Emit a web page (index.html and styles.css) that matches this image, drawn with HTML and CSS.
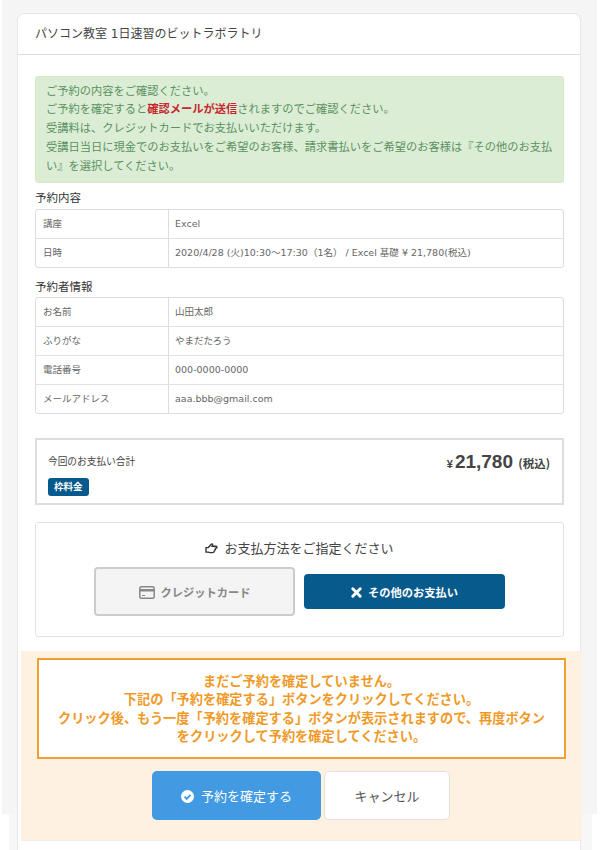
FILE: index.html
```html
<!DOCTYPE html>
<html lang="ja">
<head>
  <meta charset="UTF-8">
  <title>ご予約の確認</title>
  <link rel="stylesheet" href="styles.css">
</head>
<body>
  <div class="panel">
    <div class="panel-head">パソコン教室 1日速習のビットラボラトリ</div>
    <div class="panel-body">
      <div class="alert">
        ご予約の内容をご確認ください。<br>
        ご予約を確定すると<strong>確認メールが送信</strong>されますのでご確認ください。<br>
        受講料は、クレジットカードでお支払いいただけます。<br>
        受講日当日に現金でのお支払いをご希望のお客様、請求書払いをご希望のお客様は『その他のお支払い』を選択してください。
      </div>

      <h2 class="sec-title">予約内容</h2>
      <div class="info-table">
        <div class="row"><div class="key">講座</div><div class="val">Excel</div></div>
        <div class="row"><div class="key">日時</div><div class="val">2020/4/28 (火)10:30～17:30（1名） / Excel 基礎 ¥ 21,780(税込)</div></div>
      </div>

      <h2 class="sec-title second">予約者情報</h2>
      <div class="info-table">
        <div class="row"><div class="key">お名前</div><div class="val">山田太郎</div></div>
        <div class="row"><div class="key">ふりがな</div><div class="val">やまだたろう</div></div>
        <div class="row"><div class="key">電話番号</div><div class="val">000-0000-0000</div></div>
        <div class="row"><div class="key">メールアドレス</div><div class="val">aaa.bbb@gmail.com</div></div>
      </div>

      <div class="total">
        <div>
          <div class="total-label">今回のお支払い合計</div>
          <span class="tag">枠料金</span>
        </div>
        <div class="price"><small class="yen">¥</small>21,780 <small class="tax">(税込)</small></div>
      </div>

      <div class="pay">
        <div class="pay-title">
          <svg class="ico-hand" viewBox="0 0 14 12" width="13" height="11"><path d="M1 5h2.500L7 1.200c.6-.5 1.500 0 1.200.9L7.600 3.600h4.400c1.300 0 1.300 2 0 2h-.7c.5.900 0 1.600-.6 1.800.2.900-.2 1.500-.9 1.700 0 1-.6 1.400-1.500 1.400H5.500L3.500 10H1z" fill="none" stroke="#333" stroke-width="1.500"/></svg>
          お支払方法をご指定ください
        </div>
        <div class="pay-btns">
          <button class="btn-card">
            <svg viewBox="0 0 16 13" width="16" height="13"><rect x=".8" y=".8" width="14.400" height="11.400" rx="1.500" fill="none" stroke="#888" stroke-width="1.500"/><rect x="1" y="3" width="14" height="2.500" fill="#888"/><rect x="3" y="9" width="3" height="1" fill="#888"/></svg>
            クレジットカード
          </button>
          <button class="btn-other">
            <svg viewBox="0 0 12 12" width="11" height="11"><path d="M2 2l8 8M10 2l-8 8" stroke="#fff" stroke-width="3.200" stroke-linecap="round"/></svg>
            その他のお支払い
          </button>
        </div>
      </div>
    </div>

    <div class="confirm">
      <div class="notice">
        まだご予約を確定していません。<br>
        下記の「予約を確定する」ボタンをクリックしてください。<br>
        クリック後、もう一度「予約を確定する」ボタンが表示されますので、再度ボタンをクリックして予約を確定してください。
      </div>
      <div class="confirm-btns">
        <button class="btn-ok">
          <svg viewBox="0 0 14 14" width="13" height="13"><circle cx="7" cy="7" r="7" fill="#fff"/><path d="M3.800 7.200l2.300 2.300 4.200-4.300" fill="none" stroke="#419ae2" stroke-width="2"/></svg>
          予約を確定する
        </button>
        <button class="btn-cancel">キャンセル</button>
      </div>
    </div>
  </div>
</body>
</html>
```

FILE: styles.css
```css
html, body { margin:0; padding:0; }
body {
  height:850px; overflow:hidden;
  font-family:"DejaVu Sans","Noto Sans CJK JP",sans-serif;
  color:#555;
  background:
    linear-gradient(#f5f5f5,#f5f5f5) 2px 0/595px 814px no-repeat,
    linear-gradient(#f7f7f7,#f7f7f7) 9px 0/583px 100% no-repeat,
    #fff;
}
.panel { margin:14px 0 0 18px; width:562px; height:836px; background:#fff; border-radius:6px 6px 0 0; box-shadow:0 0 0 1px #e6e6e6; }
.panel-head { height:41px; line-height:41px; padding-left:17px; font-size:12px; color:#444; border-bottom:1px solid #ddd; box-sizing:border-box; }
.panel-body { padding:21px 16px 0 17px; }

.alert { height:107px; box-sizing:border-box; padding:5.500px 10px 0; background:#dcedd6; border-radius:3px; border:1px solid #d6e9c6; font-size:11.250px; line-height:18.750px; color:#5a9160; }
.alert strong { color:#c8262c; }

.sec-title { margin:7px 0 2px; font-size:11.500px; line-height:17px; font-weight:400; color:#333; }
.sec-title.second { margin:11px 0 1px; }
.info-table { border:1px solid #ddd; border-radius:3px; font-size:9.500px; color:#666; }
.row { display:flex; height:29px; align-items:center; border-top:1px solid #e2e2e2; box-sizing:border-box; }
.row:first-child { border-top:0; height:28px; }
.key { width:133px; height:100%; display:flex; align-items:center; padding:0 0 2px 7px; box-sizing:border-box; border-right:1px solid #ddd; }
.val { padding:0 0 2px 6px; }

.total { display:flex; justify-content:space-between; margin-top:24px; height:67px; box-sizing:border-box; border:2px solid #ddd; padding:13px 12px 0 11px; }
.total-label { font-size:9.700px; line-height:17px; color:#444; }
.tag { display:inline-block; margin-top:8px; padding:0 6px; height:18px; line-height:18px; font-size:9.500px; font-weight:700; color:#fff; background:#075a8c; border-radius:3px; }
.price { margin-top:-4px; font-family:"Liberation Sans",sans-serif; font-size:19px; font-weight:700; color:#444; line-height:26px; }
.price .yen { font-size:11px; margin-right:2px; }
.price .tax { font-size:11.500px; font-family:"Noto Sans CJK JP",sans-serif; }

.pay { margin-top:17px; height:115px; box-sizing:border-box; border:1px solid #e2e2e2; border-radius:3px; padding:16px 0 0; }
.pay-title { text-align:center; font-size:13px; line-height:20px; color:#444; }
.ico-hand { vertical-align:-1px; margin-right:2px; }
.pay-btns { display:flex; align-items:center; gap:9px; padding-left:58px; margin-top:8px; }
button { font-family:inherit; cursor:pointer; }
.btn-card { width:201px; height:49px; background:#f4f4f4; border:2px solid #ccc; border-radius:4px; color:#888; font-size:11.250px; font-weight:700; }
.btn-card svg { vertical-align:-2px; margin-right:2px; }
.btn-other { width:201px; height:35px; background:#075a8c; border:0; border-radius:4px; color:#fff; font-size:11.250px; font-weight:700; }
.btn-other svg { vertical-align:-1px; margin-right:2px; }

.confirm { margin:14px -2px 0 3px; height:190px; box-sizing:border-box; background:#fef1e2; border-bottom:1px solid #eee; padding:7px 16px 0; }
.notice { height:101px; box-sizing:border-box; background:#fff; border:2px solid #f0a032; padding:13px 14px 0; text-align:center; font-size:13.200px; line-height:18.400px; font-weight:700; color:#ef9a28; }
.confirm-btns { display:flex; gap:3px; margin-top:12px; padding-left:115px; }
.btn-ok { width:169px; height:49px; background:#419ae2; border:0; border-radius:5px; color:#fff; font-size:13px; }
.btn-ok svg { vertical-align:-2px; margin-right:3px; }
.btn-cancel { width:126px; height:49px; background:#fff; border:1px solid #e2e2e2; border-radius:5px; color:#555; font-size:13px; }
```
